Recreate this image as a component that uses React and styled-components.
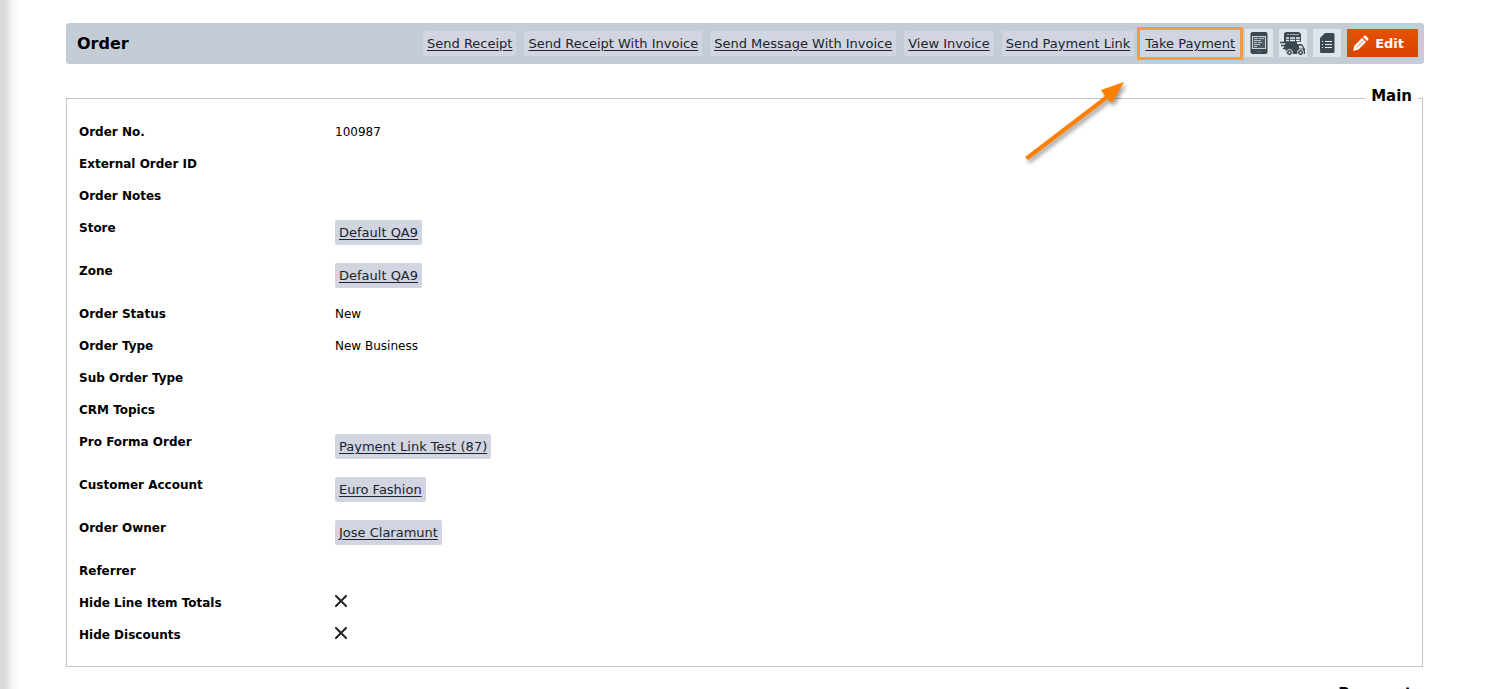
import React from 'react';
import styled, { createGlobalStyle } from 'styled-components';

const actions = [
  'Send Receipt',
  'Send Receipt With Invoice',
  'Send Message With Invoice',
  'View Invoice',
  'Send Payment Link',
];

const fields = [
  { label: 'Order No.', text: '100987' },
  { label: 'External Order ID' },
  { label: 'Order Notes' },
  { label: 'Store', link: 'Default QA9' },
  { label: 'Zone', link: 'Default QA9' },
  { label: 'Order Status', text: 'New' },
  { label: 'Order Type', text: 'New Business' },
  { label: 'Sub Order Type' },
  { label: 'CRM Topics' },
  { label: 'Pro Forma Order', link: 'Payment Link Test (87)' },
  { label: 'Customer Account', link: 'Euro Fashion' },
  { label: 'Order Owner', link: 'Jose Claramunt' },
  { label: 'Referrer' },
  { label: 'Hide Line Item Totals', off: true },
  { label: 'Hide Discounts', off: true },
];

const ReceiptIcon = () => (
  <svg width="28" height="28" viewBox="0 0 28 28" aria-hidden="true">
    <rect x="5.500" y="3" width="17" height="22" rx="2" fill="#3b4852" />
    <rect x="7.500" y="7.500" width="13" height="12" fill="#4d5a64" stroke="#c9d2d8" />
    <path d="M9 9.500h4M14 9.500h5M9 11.500h7M9 13.500h3M13 13.500h4M9 15.500h6M9 17.500h3" stroke="#bac5cc" />
    <path d="M12 22.500h4" stroke="#5c6973" />
  </svg>
);

const DeliveryIcon = () => (
  <svg width="28" height="28" viewBox="0 0 28 28" aria-hidden="true">
    <path d="M8 3h12l2 2v8H5V5q0-2 3-2z" fill="#3b4852" />
    <path d="M8 5.500h2M11 5.500h9" stroke="#9eabb4" />
    <path d="M7 9h3M11 9h5M17 9h4M7 11.500h3M11 11.500h5M17 11.500h4" stroke="#e8edf0" strokeWidth="1.500" />
    <path d="M7 13h11v2h5l3 5v5H7v-3l-2-4z" fill="#3b4852" />
    <path d="M1 13.500h7M2 16.500h6M4 19.500h4" stroke="#3b4852" strokeWidth="1.500" />
    <path d="M20 16.500h2.500l2 3H20z" fill="#cfd8de" />
    <circle cx="10.500" cy="23.500" r="3" fill="#3b4852" stroke="#e8edf0" />
    <circle cx="21.500" cy="23.500" r="3" fill="#3b4852" stroke="#e8edf0" />
    <circle cx="10.500" cy="23.500" r="1" fill="#e8edf0" />
    <circle cx="21.500" cy="23.500" r="1" fill="#e8edf0" />
  </svg>
);

const DocumentIcon = () => (
  <svg width="28" height="28" viewBox="0 0 28 28" aria-hidden="true">
    <path d="M12 4h8q1.500 0 1.500 1.500v17q0 1.500-1.500 1.500H8.500Q7 24 7 22.500V9z" fill="#3b4852" />
    <path d="M9 12.500h1M12 12.500h7M9 15.500h1M12 15.500h7M9 18.500h1M12 18.500h7" stroke="#e8edf0" />
  </svg>
);

const PencilIcon = () => (
  <svg width="16" height="16" viewBox="0 0 16 16" aria-hidden="true">
    <path d="M0 16l1.500-5.500L9 3l4 4-7.500 7.500z" fill="#fff" />
    <path d="M10 2l1-1q1-1 2 0l2 2q1 1 0 2l-1 1z" fill="#fff" />
    <path d="M3.500 12.500l7-7" stroke="#e8855a" />
  </svg>
);

const CrossIcon = () => (
  <svg width="12" height="12" viewBox="0 0 12 12" role="img" aria-label="No">
    <path d="M1 1l10 10M11 1L1 11" stroke="#222" strokeWidth="2" strokeLinecap="round" />
  </svg>
);

const Pointer = () => (
  <PointerSvg width="110" height="90" viewBox="0 0 110 90" aria-hidden="true">
    <path d="M4 80L84 19l-4-6 23-8-12 21-4-4L7 83z" fill="#ff8000" />
  </PointerSvg>
);

const Field = ({ label, text, link, off }) => (
  <Row $tall={Boolean(link)}>
    <Label>{label}</Label>
    <Value>
      {text}
      {link && <Chip href="#">{link}</Chip>}
      {off && <CrossIcon />}
    </Value>
  </Row>
);

const App = () => (
  <Page>
    <GlobalStyle />
    <Toolbar>
      <Title>Order</Title>
      <Actions>
        <Links>
          {actions.map((name) => (
            <Chip key={name} href="#">{name}</Chip>
          ))}
        </Links>
        <Highlight>
          <Chip href="#">Take Payment</Chip>
          <Pointer />
        </Highlight>
        <IconButton type="button" aria-label="Receipt"><ReceiptIcon /></IconButton>
        <IconButton type="button" aria-label="Delivery"><DeliveryIcon /></IconButton>
        <IconButton type="button" aria-label="Document"><DocumentIcon /></IconButton>
        <EditButton type="button"><PencilIcon />Edit</EditButton>
      </Actions>
    </Toolbar>
    <Panels>
      <Panel>
        <Legend>Main</Legend>
        <Fields>
          {fields.map((field) => (
            <Field key={field.label} {...field} />
          ))}
        </Fields>
      </Panel>
      <Panel>
        <Legend>Payment</Legend>
      </Panel>
    </Panels>
  </Page>
);

const GlobalStyle = createGlobalStyle`
  body {
    margin: 0;
    background: #fff;
    color: #000;
    font-family: Verdana, 'DejaVu Sans', sans-serif;
    font-size: 12px;
  }

  * {
    box-sizing: border-box;
  }
`;

const Page = styled.main`
  height: 100vh;
  overflow: hidden;
  padding: 23px 65px 0 66px;
  background: linear-gradient(90deg, #d9d9d9 0, #dedede 6px, #f5f5f5 12px, #fff 20px);
`;

const Toolbar = styled.header`
  display: flex;
  align-items: center;
  justify-content: space-between;
  height: 41px;
  padding: 0 6px 1px 11px;
  background: #c4cdd6;
  border-radius: 3px;
`;

const Title = styled.h1`
  margin: 0;
  font-size: 16px;
  font-weight: 700;
`;

const Actions = styled.nav`
  display: flex;
  align-items: center;
  gap: 6px;
`;

const Links = styled.div`
  display: flex;
  gap: 8px;
`;

const Chip = styled.a`
  display: block;
  width: fit-content;
  padding: 0 4px;
  background: #d0d5df;
  border-radius: 2px;
  color: #1c2430;
  font-size: 13px;
  line-height: 25px;
  text-underline-offset: 2px;
  white-space: nowrap;
`;

const Highlight = styled.div`
  position: relative;
  margin: 0 -4px 0 -3px;
  padding: 1px;
  background: #d0d5df;
  border: 3px solid #f79c3c;
`;

const PointerSvg = styled.svg`
  position: absolute;
  top: 47px;
  right: 109px;
  z-index: 1;
  filter: drop-shadow(2px 3px 2px rgba(0, 0, 0, 0.4));
`;

const IconButton = styled.button`
  display: flex;
  padding: 0;
  background: #dfe6eb;
  border: 0;
`;

const EditButton = styled.button`
  display: flex;
  align-items: center;
  gap: 6px;
  height: 28px;
  padding: 0 14px 0 6px;
  background: linear-gradient(#e65207, #d94200);
  border: 0;
  color: #fff;
  font-family: inherit;
  font-size: 13px;
  font-weight: 700;
`;

const Panels = styled.div`
  display: grid;
  gap: 17px;
  margin: 22px 1px 0 0;
`;

const Panel = styled.fieldset`
  min-width: 0;
  margin: 0;
  padding: 14px 12px 7px;
  border: 1px solid #bcc6c9;
`;

const Legend = styled.legend`
  margin: 0 -8px 0 auto;
  padding: 0 6px 4px;
  font-size: 15px;
  font-weight: 700;
  line-height: 20px;
`;

const Fields = styled.dl`
  margin: 0;
`;

const Row = styled.div`
  display: grid;
  grid-template-columns: 256px 1fr;
  height: ${({ $tall }) => ($tall ? '43px' : '32px')};
  line-height: 16px;
`;

const Label = styled.dt`
  font-weight: 700;
`;

const Value = styled.dd`
  margin: 0;
`;

export default App;
